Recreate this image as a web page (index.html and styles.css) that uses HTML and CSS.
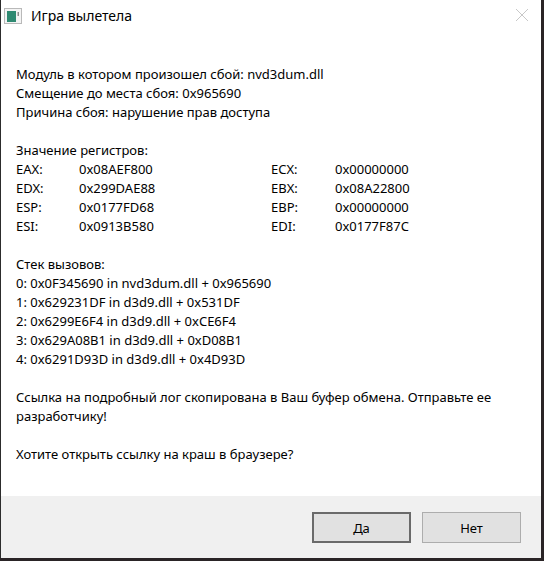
FILE: index.html
```html
<!DOCTYPE html>
<html lang="ru">
<head>
<meta charset="utf-8">
<title>Игра вылетела</title>
<link rel="stylesheet" href="styles.css">
</head>
<body>
<div class="screen">
  <div class="window">
    <div class="titlebar">
      <span class="app-icon">
        <svg width="18" height="16" viewBox="0 0 18 16">
          <rect x="0.5" y="0.5" width="17" height="15" fill="#f4f4f4" stroke="#b9b9b9"/>
          <rect x="3" y="3" width="9" height="11" fill="#2f8a72"/>
          <rect x="13.5" y="4" width="1.5" height="4" fill="#8a8a8a"/>
        </svg>
      </span>
      <span class="title">Игра вылетела</span>
      <span class="close">
        <svg width="14" height="14" viewBox="0 0 14 14">
          <path d="M1 1 L13 13 M13 1 L1 13" stroke="#c8c8c8" stroke-width="1" fill="none"/>
        </svg>
      </span>
    </div>
    <div class="content">
      <div class="group">
        <div class="line">Модуль в котором произошел сбой: nvd3dum.dll</div>
        <div class="line">Смещение до места сбоя: 0x965690</div>
        <div class="line">Причина сбоя: нарушение прав доступа</div>
      </div>
      <div class="group">
        <div class="line">Значение регистров:</div>
        <div class="regs">
          <span>EAX:</span><span>0x08AEF800</span><span>ECX:</span><span>0x00000000</span>
          <span>EDX:</span><span>0x299DAE88</span><span>EBX:</span><span>0x08A22800</span>
          <span>ESP:</span><span>0x0177FD68</span><span>EBP:</span><span>0x00000000</span>
          <span>ESI:</span><span>0x0913B580</span><span>EDI:</span><span>0x0177F87C</span>
        </div>
      </div>
      <div class="group">
        <div class="line">Стек вызовов:</div>
        <div class="line">0: 0x0F345690 in nvd3dum.dll + 0x965690</div>
        <div class="line">1: 0x629231DF in d3d9.dll + 0x531DF</div>
        <div class="line">2: 0x6299E6F4 in d3d9.dll + 0xCE6F4</div>
        <div class="line">3: 0x629A08B1 in d3d9.dll + 0xD08B1</div>
        <div class="line">4: 0x6291D93D in d3d9.dll + 0x4D93D</div>
      </div>
      <div class="group">
        <div class="line">Ссылка на подробный лог скопирована в Ваш буфер обмена. Отправьте ее</div>
        <div class="line">разработчику!</div>
      </div>
      <div class="group">
        <div class="line">Хотите открыть ссылку на краш в браузере?</div>
      </div>
    </div>
    <div class="footer">
      <button class="btn btn-default">Да</button>
      <button class="btn">Нет</button>
    </div>
  </div>
  <div class="desktop"></div>
</div>
</body>
</html>
```
FILE: styles.css
```css
* { box-sizing: border-box; }
html, body { margin: 0; padding: 0; }
body {
  width: 544px;
  height: 561px;
  overflow: hidden;
  font-family: "Noto Sans", "Open Sans", sans-serif;
  color: #000;
  background: #2a2426;
}
.screen {
  display: flex;
  flex-direction: column;
  width: 544px;
  height: 561px;
}
.window {
  display: flex;
  flex-direction: column;
  width: 541px;
  height: 558px;
  background: #fff;
  border-left: 1px solid #2c2c2c;
}
.titlebar {
  height: 30px;
  display: flex;
  align-items: center;
  padding-left: 3px;
  padding-right: 12px;
}
.app-icon { display: flex; width: 18px; height: 16px; margin-top: 2px; }
.title {
  margin-left: 9px;
  font-size: 14px;
  color: #000;
  flex: 1;
}
.close { display: flex; margin-top: 0; }
.content {
  flex: 1;
  padding: 35px 0 0 15px;
  font-size: 13px;
  line-height: 19px;
}
.group { margin-bottom: 19px; }
.line { height: 19px; white-space: nowrap; }
.regs {
  display: grid;
  grid-template-columns: 63px 192px 64px auto;
  grid-auto-rows: 19px;
}
.footer {
  height: 62px;
  background: #f0f0f0;
  display: flex;
  justify-content: flex-end;
  align-items: flex-start;
  gap: 11px;
  padding: 16px 20px 0 0;
}
.btn {
  width: 99px;
  height: 31px;
  background: #e1e1e1;
  border: 1px solid #adadad;
  font-family: "Noto Sans", "Open Sans", sans-serif;
  font-size: 13px;
  color: #000;
  padding: 0;
}
.btn-default {
  border: 2px solid #6a6a6a;
}
.desktop { flex: 1; }
```
